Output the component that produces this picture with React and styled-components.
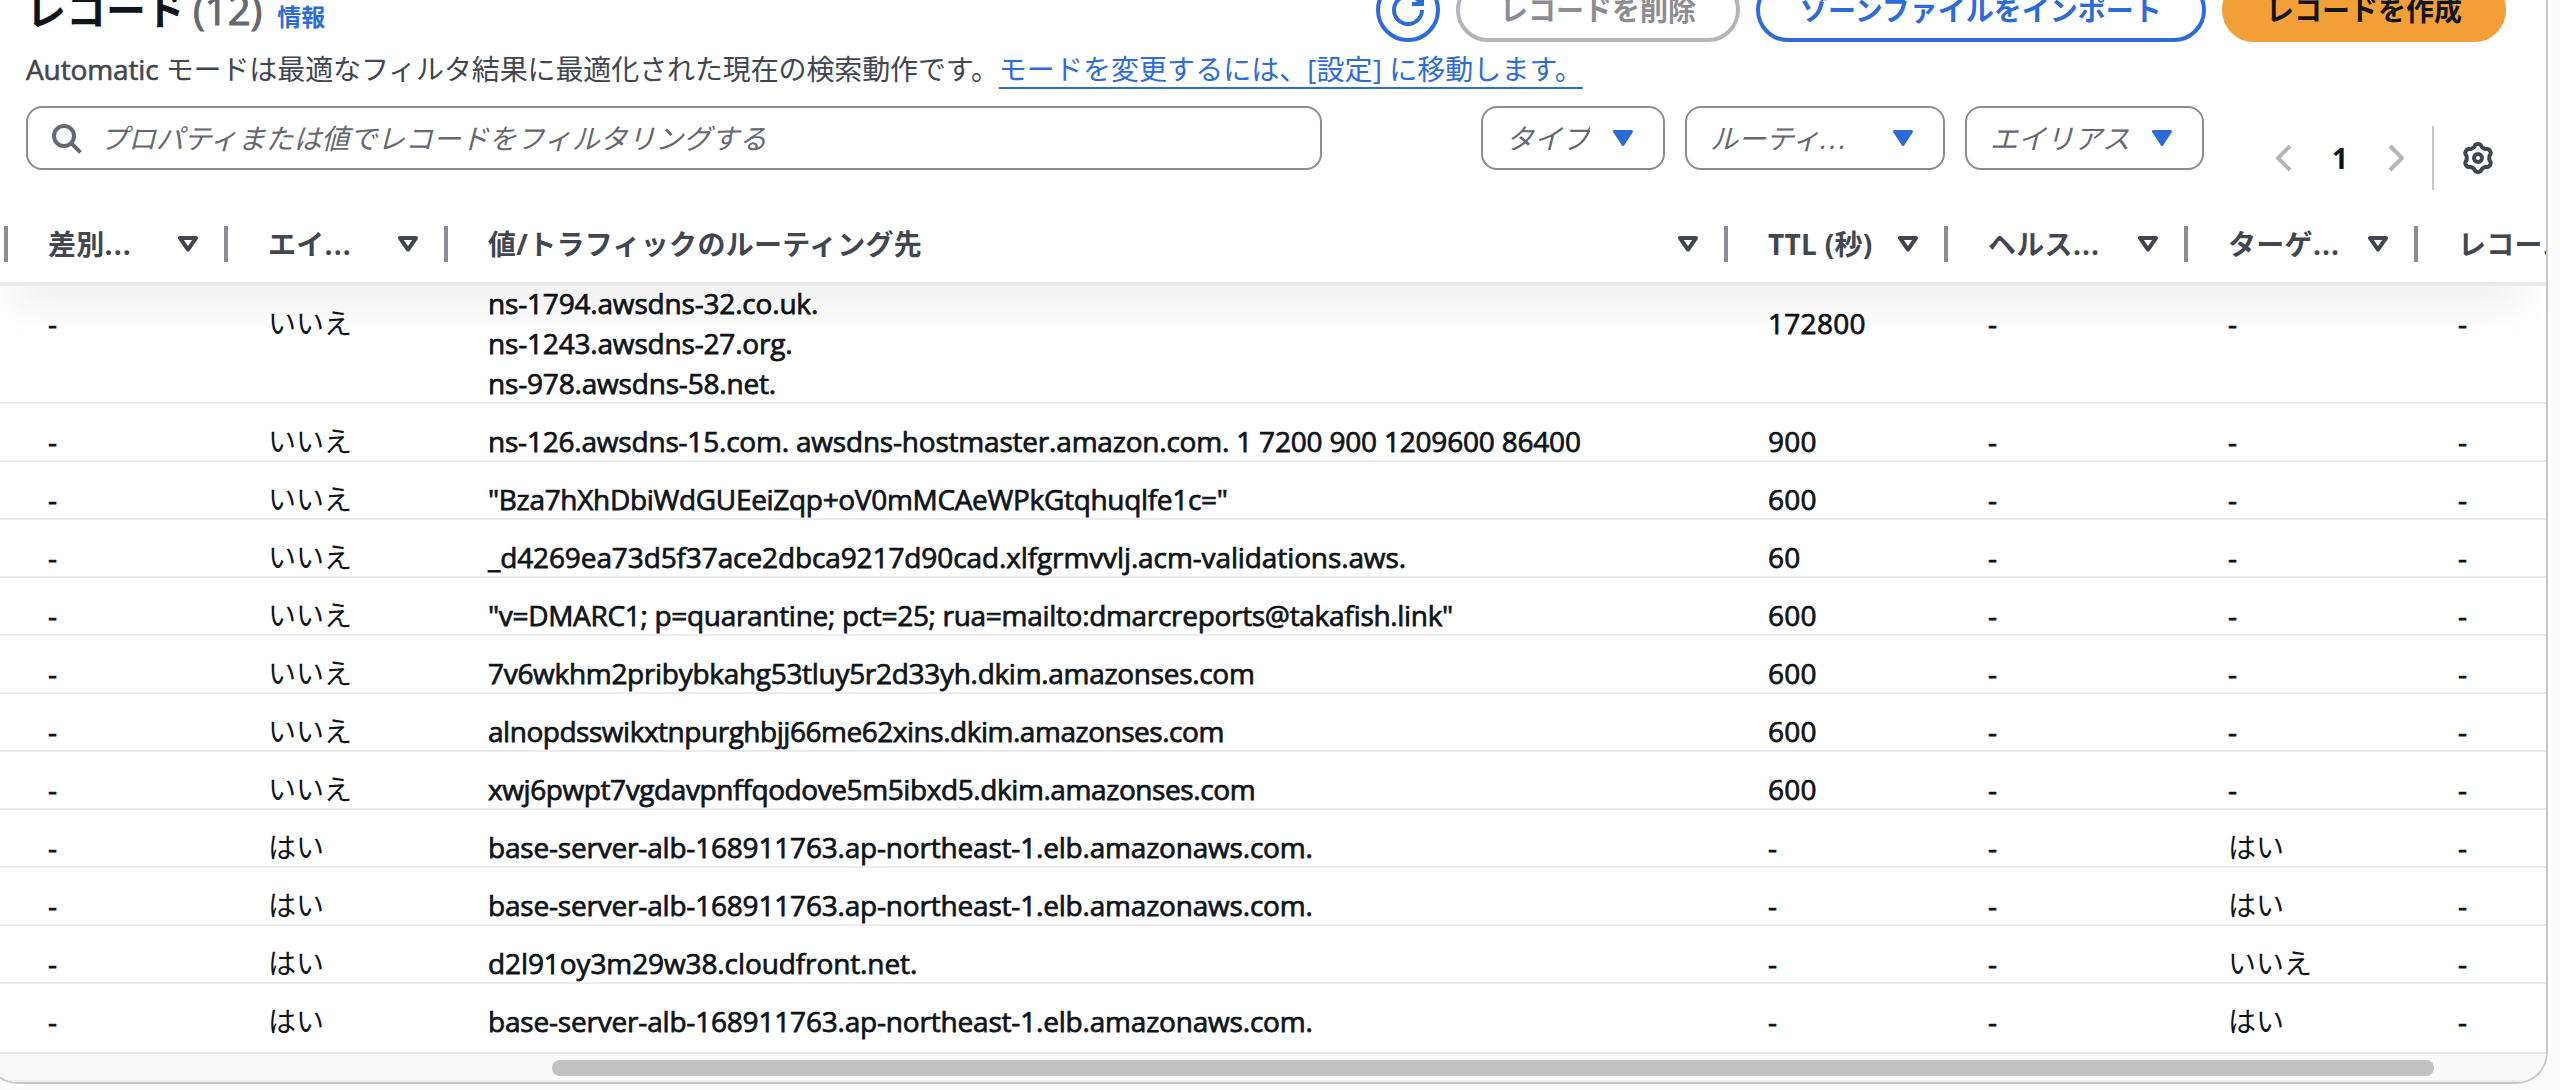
import React from "react";
import styled, { createGlobalStyle, css } from "styled-components";

const color = {
  text: "#0f141a",
  heading: "#424650",
  muted: "#656871",
  border: "#8c8c94",
  disabled: "#b4b4bb",
  divider: "#c6c6cd",
  rowLine: "#ebebf0",
  link: "#2d6bdb",
  orange: "#f29f38",
};

const Global = createGlobalStyle`
  *, *::before, *::after { box-sizing: border-box; }
  body {
    margin: 0;
    background: #fcfcfd;
    overflow: hidden;
    color: ${color.text};
    font-family: "Open Sans", "Noto Sans CJK JP", sans-serif;
    font-size: 28px;
    line-height: 40px;
  }
`;

const Page = styled.div`
  width: 2560px;
  height: 1090px;
  overflow: hidden;
`;

const Container = styled.section`
  width: 2562px;
  height: 1084px;
  margin-left: -14px;
  background: #fff;
  border: 2px solid ${color.divider};
  border-top: 0;
  border-radius: 0 0 32px 32px;
  overflow: hidden;
  display: flex;
  flex-direction: column;
`;

const TitleRow = styled.header`
  display: flex;
  justify-content: space-between;
  flex: none;
  height: 64px;
  margin-top: -22px;
  padding: 0 40px 0 38px;
`;

const Title = styled.h2`
  display: flex;
  margin: 0;
  font-size: 40px;
  font-weight: 700;
  line-height: 64px;
`;

const Counter = styled.span`
  margin-left: 7px;
  color: ${color.muted};
  font-weight: 400;
  -webkit-text-stroke: 1.1px ${color.muted};
`;

const InfoLink = styled.a`
  margin-left: 15px;
  padding-top: 7px;
  color: ${color.link};
  font-size: 24px;
  font-weight: 700;
`;

const Actions = styled.div`
  display: flex;
  gap: 16px;
`;

const buttonTone = {
  normal: css`
    color: ${color.link};
    border-color: ${color.link};
  `,
  disabled: css`
    color: ${color.border};
    border-color: ${color.disabled};
  `,
  primary: css`
    color: ${color.text};
    background: ${color.orange};
    border-color: ${color.orange};
  `,
};

const Button = styled.button`
  display: flex;
  align-items: center;
  justify-content: center;
  width: ${(p) => p.$width}px;
  height: 64px;
  padding: 0;
  border: 4px solid;
  border-radius: 40px;
  background: #fff;
  font: inherit;
  font-weight: 700;
  white-space: nowrap;
  ${(p) => buttonTone[p.$tone || "normal"]}
`;

const Description = styled.p`
  flex: none;
  margin: 7px 0 0 38px;
  color: ${color.heading};
  white-space: nowrap;
`;

const Mode = styled.span`
  letter-spacing: -0.12px;
`;

const ModeName = styled.span`
  -webkit-text-stroke: 0.6px ${color.heading};
`;

const TextLink = styled.a`
  color: ${color.link};
  letter-spacing: 0.05px;
  text-decoration: underline 2px;
  text-underline-offset: 7px;
  text-decoration-skip-ink: none;
`;

const Toolbar = styled.div`
  display: flex;
  flex: none;
  height: 100px;
  margin-top: 17px;
  padding-left: 38px;
  align-items: flex-start;
`;

const field = css`
  display: flex;
  align-items: center;
  height: 64px;
  border: 2px solid ${color.border};
  border-radius: 16px;
  color: ${color.muted};
  font-style: italic;
  white-space: nowrap;
`;

const SearchField = styled.div`
  ${field}
  width: 1296px;
  padding-left: 22px;
  gap: 18px;
  margin-right: 159px;
  letter-spacing: -0.12px;
`;

const Select = styled.div`
  ${field}
  justify-content: space-between;
  width: ${(p) => p.$width}px;
  padding: 0 30px 0 23px;
  margin-right: 20px;
`;

const SelectLabel = styled.span`
  overflow: hidden;
`;

const Ellipsis = styled.span`
  letter-spacing: 1.1px;

  ${SelectLabel} & {
    letter-spacing: 2.4px;
  }
`;

const Pagination = styled.nav`
  display: flex;
  align-items: center;
  height: 64px;
  margin: 20px 0 0 44px;
`;

const PageNumber = styled.span`
  width: 48px;
  text-align: center;
  margin: 0 16px;
  font-weight: 700;
`;

const Separator = styled.span`
  width: 2px;
  height: 64px;
  margin: 0 28px 0 20px;
  background: ${color.divider};
`;

const columns = css`
  display: grid;
  grid-template-columns: 20px 220px 220px 1280px 220px 240px 230px 128px;
`;

const TableHead = styled.div`
  ${columns}
  position: relative;
  z-index: 1;
  flex: none;
  height: 80px;
  background: #fff;
  border-bottom: 4px solid #e9eaed;
  box-shadow: 0 42px 40px -24px rgba(0, 0, 0, 0.08);
`;

const HeadCell = styled.div`
  display: flex;
  align-items: center;
  padding-left: ${(p) => (p.$edge ? 0 : 40)}px;
  color: ${color.heading};
  font-weight: 700;
  letter-spacing: 0.3px;
  white-space: nowrap;
  overflow: hidden;
`;

const HeadLabel = styled.span`
  flex: 1;
`;

const Resizer = styled.span`
  width: 4px;
  height: 36px;
  margin-left: ${(p) => (p.$edge ? "auto" : "26px")};
  background: ${color.border};
`;

const TableBody = styled.div`
  flex: none;
  margin-top: -3px;
`;

const Row = styled.div`
  ${columns}
  height: ${(p) => p.$height || 58}px;
  padding-top: ${(p) => (p.$height === 121 ? 0 : 17)}px;
  border-bottom: ${(p) => (p.$last ? 0 : 2)}px solid ${color.rowLine};
`;

const Cell = styled.div`
  padding: ${(p) => (p.$middle ? 20 : 0)}px 0 0 40px;
  white-space: nowrap;
  letter-spacing: ${(p) => (p.$thin ? 0 : 0.3)}px;
  -webkit-text-stroke: ${(p) => (p.$thin ? 0 : 0.75)}px ${color.text};
`;

const Value = styled.div`
  letter-spacing: ${(p) => p.$tracking || 0}px;
  font-feature-settings: "liga" 1;
`;

const ScrollTrack = styled.div`
  flex: none;
  display: flex;
  align-items: center;
  height: 30px;
  padding: 2px 0 0 564px;
  background: #fafafa;
  border-top: 2px solid #e8e8e8;
  border-bottom: 2px solid #ededed;
`;

const ScrollThumb = styled.div`
  width: 1882px;
  height: 16px;
  border-radius: 8px;
  background: #c1c1c1;
`;

const Icon = ({ size = 32, tint, children }) => (
  <svg
    width={size}
    height={size}
    viewBox="0 0 16 16"
    fill="none"
    stroke={tint}
    strokeWidth="2"
    strokeLinejoin="round"
  >
    {children}
  </svg>
);

const Refresh = () => (
  <Icon tint={color.link}>
    <path d="M15 8c0 3.87-3.13 7-7 7s-7-3.13-7-7 3.13-7 7-7c2.79 0 5.2 1.63 6.33 4" strokeLinejoin="miter" />
    <path d="M10 5h5V0" strokeLinejoin="miter" />
  </Icon>
);

const Search = () => (
  <Icon tint={color.muted}>
    <circle cx="7" cy="7" r="5" />
    <path d="m10.6 10.6 4.6 4.6" />
  </Icon>
);

const Chevron = ({ d }) => (
  <Icon tint={color.disabled}>
    <path d={d} />
  </Icon>
);

/* Six rounded teeth around the hub, the first one pointing up. */
const gearOutline = Array.from({ length: 120 }, (_, i) => {
  const angle = (i / 120) * Math.PI * 2;
  const radius = 6.3 + 0.72 * Math.tanh(1.6 * Math.cos(6 * angle));
  return `${(8 + radius * Math.sin(angle)).toFixed(2)},${(8 - radius * Math.cos(angle)).toFixed(2)}`;
}).join(" ");

const Gear = () => (
  <Icon tint={color.heading}>
    <polygon points={gearOutline} />
    <circle cx="8" cy="8" r="2" />
  </Icon>
);

const Triangle = ({ filled, tint }) => (
  <svg width="20" height="16" viewBox="0 0 20 16" fill={filled ? tint : "none"} stroke={tint} strokeLinejoin="round">
    {filled ? (
      <path d="M1.5 1.5h17L10 14.5z" strokeWidth="3" />
    ) : (
      <path d="M2 2h16L10 13.6z" strokeWidth="4" />
    )}
  </svg>
);

const Label = ({ text, cut }) => (
  <>
    {text}
    {cut && <Ellipsis>...</Ellipsis>}
  </>
);

const headings = [
  { text: "差別", cut: true },
  { text: "エイ", cut: true },
  { text: "値/トラフィックのルーティング先" },
  { text: "TTL (秒)" },
  { text: "ヘルス", cut: true },
  { text: "ターゲ", cut: true },
];

const rows = [
  { alias: "いいえ", values: ["ns-1794.awsdns-32.co.uk.", "ns-1243.awsdns-27.org.", "ns-978.awsdns-58.net."], ttl: "172800", target: "-", tracking: -0.18 },
  { alias: "いいえ", values: ["ns-126.awsdns-15.com. awsdns-hostmaster.amazon.com. 1 7200 900 1209600 86400"], ttl: "900", target: "-", tracking: -0.2 },
  { alias: "いいえ", values: ['"Bza7hXhDbiWdGUEeiZqp+oV0mMCAeWPkGtqhuqlfe1c="'], ttl: "600", target: "-", tracking: -0.32 },
  { alias: "いいえ", values: ["_d4269ea73d5f37ace2dbca9217d90cad.xlfgrmvvlj.acm-validations.aws."], ttl: "60", target: "-", tracking: -0.11 },
  { alias: "いいえ", values: ['"v=DMARC1; p=quarantine; pct=25; rua=mailto:dmarcreports@takafish.link"'], ttl: "600", target: "-", tracking: -0.31 },
  { alias: "いいえ", values: ["7v6wkhm2pribybkahg53tluy5r2d33yh.dkim.amazonses.com"], ttl: "600", target: "-", tracking: -0.3 },
  { alias: "いいえ", values: ["alnopdsswikxtnpurghbjj66me62xins.dkim.amazonses.com"], ttl: "600", target: "-", tracking: -0.47 },
  { alias: "いいえ", values: ["xwj6pwpt7vgdavpnffqodove5m5ibxd5.dkim.amazonses.com"], ttl: "600", target: "-", tracking: -0.41 },
  { alias: "はい", values: ["base-server-alb-168911763.ap-northeast-1.elb.amazonaws.com."], ttl: "-", target: "はい", tracking: -0.19 },
  { alias: "はい", values: ["base-server-alb-168911763.ap-northeast-1.elb.amazonaws.com."], ttl: "-", target: "はい", tracking: -0.19 },
  { alias: "はい", values: ["d2l91oy3m29w38.cloudfront.net."], ttl: "-", target: "いいえ", tracking: -0.1 },
  { alias: "はい", values: ["base-server-alb-168911763.ap-northeast-1.elb.amazonaws.com."], ttl: "-", target: "はい", tracking: -0.19 },
];

const rowHeight = (index) => {
  if (index === 0) return 121;
  return index === rows.length - 1 ? 68 : 58;
};

const RecordRow = ({ record, index }) => {
  const tall = record.values.length > 1;
  return (
    <Row $height={rowHeight(index)} $last={index === rows.length - 1}>
      <span />
      <Cell $middle={tall}>-</Cell>
      <Cell $middle={tall} $thin>{record.alias}</Cell>
      <Cell>
        {record.values.map((v) => (
          <Value key={v} $tracking={record.tracking}>{v}</Value>
        ))}
      </Cell>
      <Cell $middle={tall}>{record.ttl}</Cell>
      <Cell $middle={tall}>-</Cell>
      <Cell $middle={tall} $thin={record.target !== "-"}>{record.target}</Cell>
      <Cell $middle={tall}>-</Cell>
    </Row>
  );
};

export default function App() {
  return (
    <Page>
      <Global />
      <Container>
        <TitleRow>
          <Title>
            レコード
            <Counter>(12)</Counter>
            <InfoLink>情報</InfoLink>
          </Title>
          <Actions>
            <Button $width={64}><Refresh /></Button>
            <Button $width={284} $tone="disabled">レコードを削除</Button>
            <Button $width={450}>ゾーンファイルをインポート</Button>
            <Button $width={284} $tone="primary">レコードを作成</Button>
          </Actions>
        </TitleRow>
        <Description>
          <Mode><ModeName>Automatic</ModeName> モードは最適なフィルタ結果に最適化された現在の検索動作です。</Mode>
          <TextLink>モードを変更するには、[設定] に移動します。</TextLink>
        </Description>
        <Toolbar>
          <SearchField>
            <Search />
            プロパティまたは値でレコードをフィルタリングする
          </SearchField>
          <Select $width={184}>
            <SelectLabel>タイプ</SelectLabel>
            <Triangle filled tint={color.link} />
          </Select>
          <Select $width={260}>
            <SelectLabel><Label text="ルーティ" cut /></SelectLabel>
            <Triangle filled tint={color.link} />
          </Select>
          <Select $width={239}>
            <SelectLabel>エイリアス</SelectLabel>
            <Triangle filled tint={color.link} />
          </Select>
          <Pagination>
            <Chevron d="M11 2 5 8l6 6" />
            <PageNumber>1</PageNumber>
            <Chevron d="m5 2 6 6-6 6" />
            <Separator />
            <Gear />
          </Pagination>
        </Toolbar>
        <TableHead>
          <HeadCell $edge><Resizer $edge /></HeadCell>
          {headings.map((h) => (
            <HeadCell key={h.text}>
              <HeadLabel><Label {...h} /></HeadLabel>
              <Triangle tint={color.heading} />
              <Resizer />
            </HeadCell>
          ))}
          <HeadCell>
            <HeadLabel><Label text="レコー" cut /></HeadLabel>
          </HeadCell>
        </TableHead>
        <TableBody>
          {rows.map((record, i) => (
            <RecordRow key={i} record={record} index={i} />
          ))}
        </TableBody>
        <ScrollTrack><ScrollThumb /></ScrollTrack>
      </Container>
    </Page>
  );
}
